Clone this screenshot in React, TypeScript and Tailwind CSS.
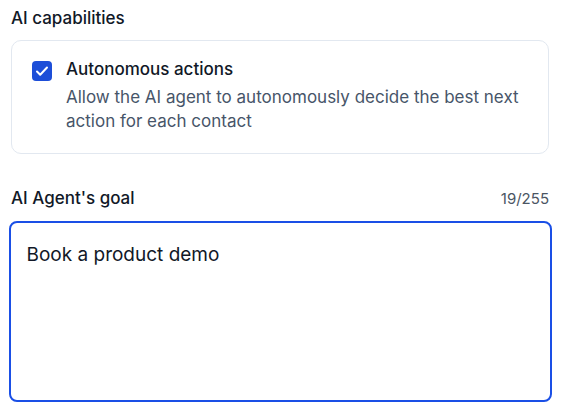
import React, { useState } from 'react';

export default function App() {
  const [autonomous, setAutonomous] = useState(true);
  const [goal, setGoal] = useState('Book a product demo');

  return (
    <div
      className="min-h-screen bg-white pl-[11px] pr-[12px] pt-[6px] text-[#111827]"
      style={{ fontFamily: 'Inter, "Noto Sans", sans-serif' }}
    >
      {/* AI CAPABILITIES */}
      <h3 className="text-[17px] leading-6 font-medium">AI capabilities</h3>

      <div className="mt-[10px] rounded-[10px] border border-[#e2e8f0] pl-5 pr-5 pt-4 pb-5">
        <label className="flex gap-[14px] cursor-pointer">
          <button
            type="button"
            onClick={() => setAutonomous(!autonomous)}
            className="mt-1 flex h-5 w-5 shrink-0 items-center justify-center rounded-[4px] bg-[#1d4ed8]"
          >
            {autonomous && (
              <svg viewBox="0 0 20 20" className="h-5 w-5" fill="none">
                <path
                  d="M5 10.5l3.2 3.2 6.8-7.2"
                  stroke="white"
                  strokeWidth="2"
                  strokeLinecap="round"
                  strokeLinejoin="round"
                />
              </svg>
            )}
          </button>
          <div>
            <p className="text-[17px] leading-6 font-medium">Autonomous actions</p>
            <p className="mt-1 text-[17px] leading-6 text-[#475569]">
              Allow the AI agent to autonomously decide the best next action for each contact
            </p>
          </div>
        </label>
      </div>

      {/* GOAL */}
      <div className="mt-8 flex items-baseline justify-between">
        <h3 className="text-[17px] leading-6 font-medium">AI Agent's goal</h3>
        <span className="text-[15px] text-[#4b5563]">{goal.length}/255</span>
      </div>

      <textarea
        value={goal}
        onChange={(e) => setGoal(e.target.value)}
        maxLength={255}
        className="-mx-[2.5px] mt-[10px] block h-[181px] w-[calc(100%+5px)] resize-none rounded-[8px] border-2 border-[#1a4fe6] px-4 pt-[18px] pb-4 text-[19px] leading-7 text-[#111827] outline-none"
      />
    </div>
  );
}
